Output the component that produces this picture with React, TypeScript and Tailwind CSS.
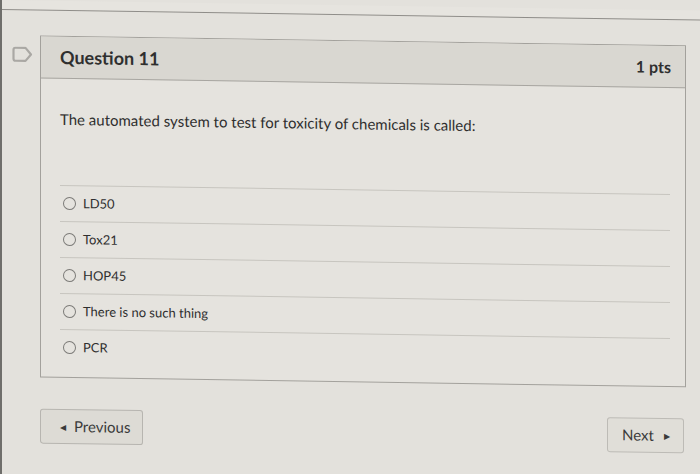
const answers = ["LD50", "Tox21", "HOP45", "There is no such thing", "PCR"];

const FlagIcon = () => (
  <svg width="21" height="16" viewBox="0 0 21 16" fill="none">
    <path
      d="M3.5 1.5 H13.5 L19 8 L13.5 14.5 H3.5 Q1.5 14.5 1.5 12.5 V3.5 Q1.5 1.5 3.5 1.5 Z"
      stroke="#aaa8a4"
      strokeWidth="2.2"
      strokeLinejoin="round"
    />
  </svg>
);

const App = () => {
  return (
    <div className="w-[700px] h-[474px] overflow-hidden bg-[#e3e1dc] border-l-2 border-[#6f6e6b] font-['Lato','Open_Sans',sans-serif] text-[#2f2f2f]">
      <div className="origin-top-left skew-y-[0.86deg] -ml-[2px]">
        <div className="h-[10px] border-b border-[#8f8d89] bg-[#e6e4df]" />

        <div className="flex items-start pt-[25px]">
          <div className="ml-[12px] mt-[11px]">
            <FlagIcon />
          </div>

          <div className="ml-[7px] w-[646px]">
            <div className="border border-[#a3a19c] bg-[#e5e3de]">
              <div className="h-[42px] bg-[#d9d7d1] border-b border-[#a8a6a1] flex items-center justify-between pl-[19px] pr-[14px]">
                <span className="text-[18px] font-bold">Question 11</span>
                <span className="text-[16px] font-bold">1 pts</span>
              </div>

              <div className="pt-[30px] pb-[12px]">
                <p className="px-[19px] text-[15px] leading-5">
                  The automated system to test for toxicity of chemicals is called:
                </p>

                <div className="mt-[56px] pl-[19px] pr-[15px]">
                  {answers.map((a) => (
                    <div
                      key={a}
                      className="h-9 border-t border-[#c7c5bf] flex items-center"
                    >
                      <span className="ml-[3px] w-[13px] h-[13px] rounded-full border-[1.5px] border-[#7c7b78]" />
                      <span className="ml-[7px] text-[13px]">{a}</span>
                    </div>
                  ))}
                </div>
              </div>
            </div>

            <div className="mt-[31px] flex justify-between">
              <button className="w-[103px] h-[35px] rounded-[3px] border border-[#b7b5b0] bg-[#dddbd5] flex items-center pl-[19px] text-[15px] text-[#3a3a3a]">
                <span className="text-[8px] mr-[8px]">◀</span>
                Previous
              </button>
              <button className="mr-[2px] w-[77px] h-[35px] rounded-[3px] border border-[#bdbbb6] bg-[#e0ded8] flex items-center pl-[14px] text-[15px] text-[#3a3a3a]">
                Next
                <span className="text-[8px] ml-[10px]">▶</span>
              </button>
            </div>
          </div>
        </div>
      </div>
    </div>
  );
};

export default App;
